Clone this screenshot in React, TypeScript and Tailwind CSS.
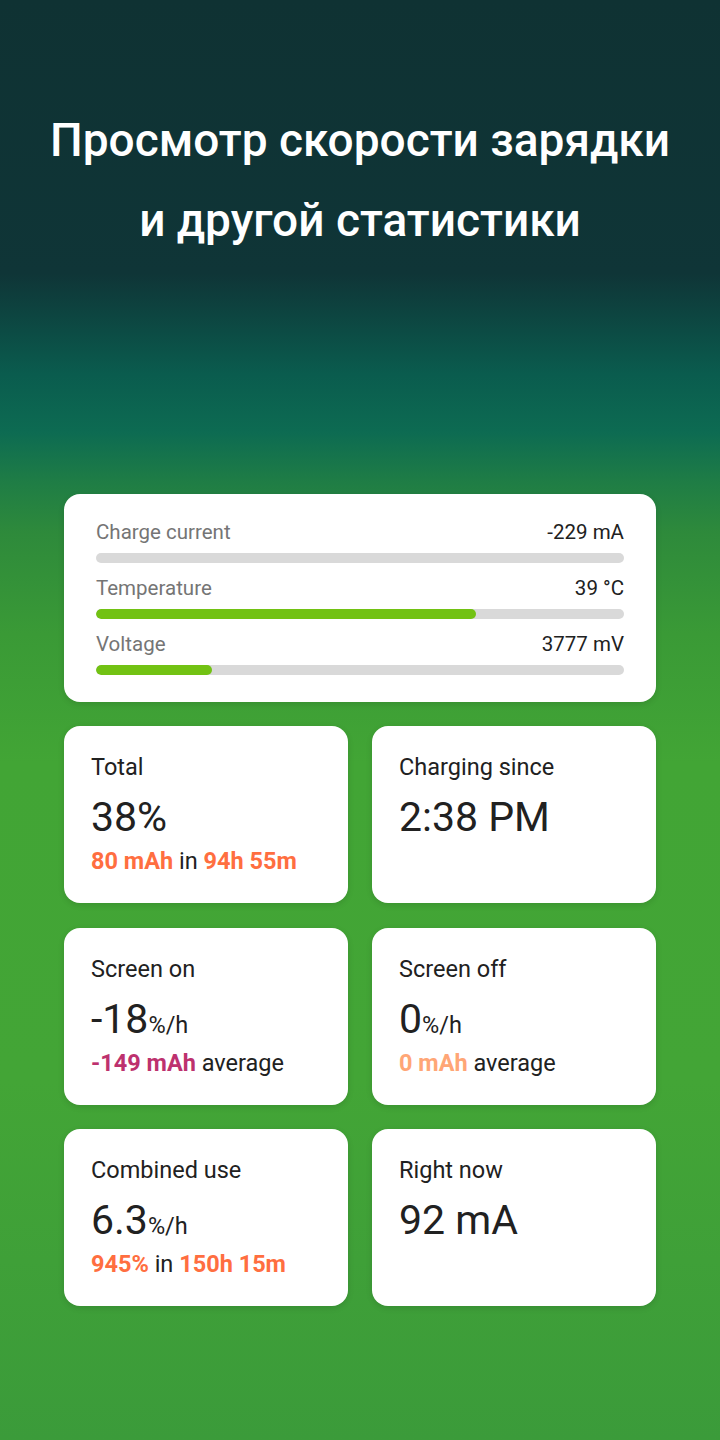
const font = { fontFamily: "Roboto, 'Noto Sans', sans-serif" };

const BARS = [
  { label: "Charge current", value: "-229 mA", pct: 0 },
  { label: "Temperature", value: "39 °C", pct: 72 },
  { label: "Voltage", value: "3777 mV", pct: 22 },
];

function StatCard({ title, children }: { title: string; children: React.ReactNode }) {
  return (
    <div className="bg-white rounded-[16px] h-[177px] pl-[27px] pr-4 pt-[27px] shadow-[0_2px_6px_rgba(0,0,0,0.12)]">
      <p className="text-[23.5px] leading-[28px] text-[#212121]">{title}</p>
      {children}
    </div>
  );
}

function Big({ value, unit }: { value: string; unit?: string }) {
  return (
    <p className="mt-[12px] h-[48px] text-[41px] leading-[48px] text-[#212121]">
      {value}
      {unit && <span className="text-[23.5px] leading-none">{unit}</span>}
    </p>
  );
}

export default function App() {
  return (
    <div
      style={font}
      className="w-[720px] h-[1440px] overflow-hidden flex flex-col bg-[linear-gradient(180deg,#0f3233_0%,#0f3537_19%,#0a5c4e_26%,#0d6b52_30%,#1f7d45_33.5%,#2e8a3b_37%,#3a9a36_44%,#42a535_53%,#43a536_75%,#3b9b3a_100%)]"
    >
      <h1 className="mt-[100px] text-center text-white text-[46px] leading-[80px] font-medium">
        Просмотр скорости зарядки
        <br />и другой статистики
      </h1>

      <div className="mt-[234px] mx-[64px] flex flex-col gap-[24px]">
        <div className="bg-white rounded-[16px] px-[32px] pt-[26px] pb-[27px] shadow-[0_2px_6px_rgba(0,0,0,0.12)] flex flex-col gap-[13px]">
          {BARS.map((b) => (
            <div key={b.label}>
              <div className="flex justify-between text-[20.5px] leading-[24px]">
                <span className="text-[#757575]">{b.label}</span>
                <span className="text-[#212121]">{b.value}</span>
              </div>
              <div className="mt-[9px] h-[10px] rounded-full bg-[#d9d9d9] overflow-hidden">
                <div className="h-full rounded-full bg-[#72c213]" style={{ width: `${b.pct}%` }} />
              </div>
            </div>
          ))}
        </div>

        <div className="grid grid-cols-2 gap-x-[24px] gap-y-[24.5px]">
          <StatCard title="Total">
            <Big value="38%" />
            <p className="mt-[6px] text-[23.5px] leading-[28px] text-[#212121]">
              <span className="font-bold text-[#ff6e40]">80 mAh</span> in{" "}
              <span className="font-bold text-[#ff6e40]">94h 55m</span>
            </p>
          </StatCard>
          <StatCard title="Charging since">
            <Big value="2:38 PM" />
          </StatCard>
          <StatCard title="Screen on">
            <Big value="-18" unit="%/h" />
            <p className="mt-[6px] text-[23.5px] leading-[28px] text-[#212121]">
              <span className="font-bold text-[#bd316e]">-149 mAh</span> average
            </p>
          </StatCard>
          <StatCard title="Screen off">
            <Big value="0" unit="%/h" />
            <p className="mt-[6px] text-[23.5px] leading-[28px] text-[#212121]">
              <span className="font-bold text-[#ffa676]">0 mAh</span> average
            </p>
          </StatCard>
          <StatCard title="Combined use">
            <Big value="6.3" unit="%/h" />
            <p className="mt-[6px] text-[23.5px] leading-[28px] text-[#212121]">
              <span className="font-bold text-[#ff6e40]">945%</span> in{" "}
              <span className="font-bold text-[#ff6e40]">150h 15m</span>
            </p>
          </StatCard>
          <StatCard title="Right now">
            <Big value="92 mA" />
          </StatCard>
        </div>
      </div>
    </div>
  );
}
